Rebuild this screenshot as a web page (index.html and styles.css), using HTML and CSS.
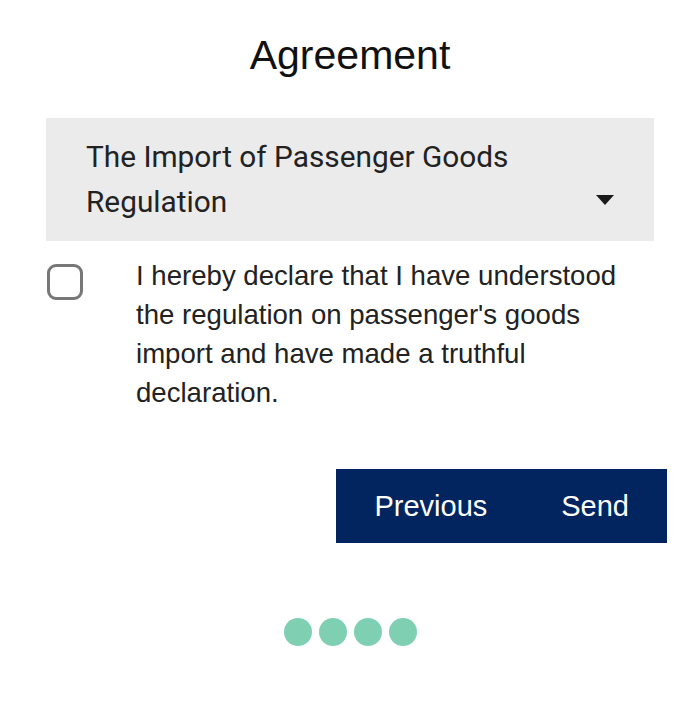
FILE: index.html
```html
<!DOCTYPE html>
<html lang="en">
<head>
    <meta charset="UTF-8">
    <meta name="viewport" content="width=device-width, initial-scale=1.0">
    <title>Agreement</title>
    <link rel="stylesheet" href="styles.css">
</head>
<body>
    <div class="page">
        <h1 class="title">Agreement</h1>

        <!-- Regulation dropdown -->
        <div class="dropdown">
            <span class="dropdown-text">The Import of Passenger Goods Regulation</span>
            <span class="caret"></span>
        </div>

        <!-- Declaration -->
        <label class="declare">
            <span class="checkbox"></span>
            <span class="declare-text">I hereby declare that I have understood the regulation on passenger's goods import and have made a truthful declaration.</span>
        </label>

        <div class="actions">
            <button class="btn">Previous</button>
            <button class="btn">Send</button>
        </div>

        <!-- Step indicator -->
        <div class="steps">
            <span class="dot"></span>
            <span class="dot"></span>
            <span class="dot"></span>
            <span class="dot"></span>
        </div>
    </div>
</body>
</html>
```

FILE: styles.css
```css
body {
    margin: 0;
    padding: 0;
    background-color: #fff;
    font-family: 'Liberation Sans', Arial, sans-serif;
    color: #1c1c1c;
}

.page {
    width: 700px;
    padding: 31px 46px 0;
    box-sizing: border-box;
}

.title {
    margin: 0 0 39px;
    text-align: center;
    font-size: 41px;
    line-height: 48px;
    font-weight: normal;
    color: #111;
}

.dropdown {
    display: flex;
    align-items: flex-end;
    justify-content: space-between;
    background-color: #ebebeb;
    padding: 16px 40px 17px 40px;
}

.dropdown-text {
    font-family: Roboto, sans-serif;
    font-size: 29.8px;
    line-height: 45px;
    color: #222;
    width: 460px;
}

.caret {
    width: 0;
    height: 0;
    border-left: 9px solid transparent;
    border-right: 9px solid transparent;
    border-top: 10px solid #1a1a1a;
    margin-bottom: 19px;
}

.declare {
    display: flex;
    align-items: flex-start;
    margin-top: 15px;
}

.checkbox {
    flex: none;
    width: 30px;
    height: 30px;
    margin: 8px 0 0 1px;
    border: 3px solid #777;
    border-radius: 9px;
}

.declare-text {
    margin-left: 53px;
    font-size: 27.6px;
    line-height: 39px;
    color: #222;
    width: 500px;
}

.actions {
    display: flex;
    justify-content: flex-end;
    margin: 57px -13px 0 0;
}

.btn {
    background-color: #02245f;
    color: #fff;
    border: none;
    border-radius: 0;
    font-family: 'Liberation Sans', Arial, sans-serif;
    font-size: 29px;
    height: 74px;
    padding: 0 37px 0 38px;
    cursor: pointer;
}

.btn + .btn {
    padding: 0 38px 0 37px;
}

.steps {
    display: flex;
    justify-content: center;
    gap: 7px;
    margin-top: 75px;
}

.dot {
    width: 28px;
    height: 28px;
    border-radius: 50%;
    background-color: #7fcfb3;
}
```
